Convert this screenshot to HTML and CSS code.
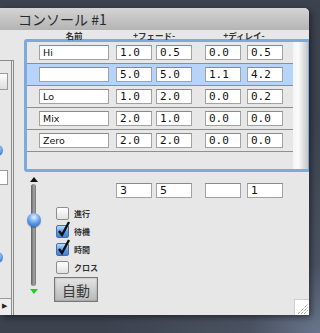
FILE: index.html
```html
<!DOCTYPE html>
<html>
<head>
    <meta charset="UTF-8">
    <title>コンソール #1</title>
    <link rel="stylesheet" href="styles.css">
</head>
<body>
    <div class="window">
        <div class="titlebar">コンソール #1</div>
        <div class="content">
            <div class="side">
                <div class="side-btn"></div>
                <div class="side-knob k1"></div>
                <div class="side-field"></div>
                <div class="side-knob k2"></div>
                <div class="side-scroll">&#9654;</div>
            </div>
            <div class="main">
                <div class="heads">
                    <span class="h-name">名前</span>
                    <span class="h-fade">+フェード-</span>
                    <span class="h-delay">+ディレイ-</span>
                </div>
                <div class="frame">
                    <div class="rows">
                        <div class="row">
                            <span class="field name">Hi</span>
                            <span class="field num c1">1.0</span>
                            <span class="field num c2">0.5</span>
                            <span class="field num c3">0.0</span>
                            <span class="field num c4">0.5</span>
                        </div>
                        <div class="row selected">
                            <span class="field name"></span>
                            <span class="field num c1">5.0</span>
                            <span class="field num c2">5.0</span>
                            <span class="field num c3">1.1</span>
                            <span class="field num c4">4.2</span>
                        </div>
                        <div class="row">
                            <span class="field name">Lo</span>
                            <span class="field num c1">1.0</span>
                            <span class="field num c2">2.0</span>
                            <span class="field num c3">0.0</span>
                            <span class="field num c4">0.2</span>
                        </div>
                        <div class="row">
                            <span class="field name">Mix</span>
                            <span class="field num c1">2.0</span>
                            <span class="field num c2">1.0</span>
                            <span class="field num c3">0.0</span>
                            <span class="field num c4">0.0</span>
                        </div>
                        <div class="row">
                            <span class="field name">Zero</span>
                            <span class="field num c1">2.0</span>
                            <span class="field num c2">2.0</span>
                            <span class="field num c3">0.0</span>
                            <span class="field num c4">0.0</span>
                        </div>
                    </div>
                    <div class="vscroll"></div>
                </div>
                <div class="lower">
                    <div class="slider">
                        <div class="arrow-up"></div>
                        <div class="track"></div>
                        <div class="arrow-down"></div>
                        <div class="knob"></div>
                    </div>
                    <div class="controls">
                        <div class="totals">
                            <span class="field total t1">3</span>
                            <span class="field total c2">5</span>
                            <span class="field total c3"></span>
                            <span class="field total c4">1</span>
                        </div>
                        <div class="checks">
                            <div class="check"><span class="box"></span><span class="label">進行</span></div>
                            <div class="check"><span class="box on"><svg width="15" height="17" viewBox="0 0 15 17"><path d="M3 10 L6 14 L13 1" fill="none" stroke="#111" stroke-width="2.4"/></svg></span><span class="label">待機</span></div>
                            <div class="check"><span class="box on"><svg width="15" height="17" viewBox="0 0 15 17"><path d="M3 10 L6 14 L13 1" fill="none" stroke="#111" stroke-width="2.4"/></svg></span><span class="label">時間</span></div>
                            <div class="check"><span class="box"></span><span class="label">クロス</span></div>
                        </div>
                        <button class="auto">自動</button>
                    </div>
                </div>
            </div>
        </div>
        <div class="grip">
            <svg width="14" height="15" viewBox="0 0 14 15">
                <path d="M3 14 L13 4 M6 14 L13 7 M9 14 L13 10" stroke="#777" stroke-width="1" stroke-dasharray="1 1"/>
            </svg>
        </div>
    </div>
</body>
</html>
```

FILE: styles.css
```css
body {
    margin: 0;
    width: 320px;
    height: 333px;
    overflow: hidden;
    background: radial-gradient(circle at 100% 100%, #68758c 0, #4a5261 70px, #3c424e 220px);
    font-family: "DejaVu Sans", sans-serif;
}
.window {
    position: relative;
    margin-top: 8px;
    width: 309px;
    height: 307px;
    background-color: #e7e7e7;
    border-radius: 0 5px 0 0;
    overflow: hidden;
    box-shadow: 2px 2px 6px rgba(0, 0, 0, 0.5);
}
.titlebar {
    height: 22px;
    line-height: 22px;
    padding-left: 18px;
    background: linear-gradient(#d4d4d4, #b4b4b4);
    color: #2a2a2a;
    font-family: "Noto Sans CJK JP", sans-serif;
    font-size: 14px;
}
.content {
    display: flex;
    height: 285px;
}
.side {
    box-sizing: border-box;
    width: 14px;
    margin-top: 30px;
    border-top: 1px solid #8c8c8c;
    border-right: 3px double #8c8c8c;
    display: flex;
    flex-direction: column;
}
.side-btn {
    width: 8px;
    height: 17px;
    margin-top: 12px;
    box-sizing: border-box;
    border: 1px solid #9a9a9a;
    border-left: none;
    background: linear-gradient(#fdfdfd, #dedede);
}
.side-knob {
    width: 11px;
    height: 11px;
    margin-left: -8px;
    border-radius: 50%;
    background: radial-gradient(circle at 50% 35%, #cfe6ff 0, #4b8fe3 60%, #1f5bb8 100%);
}
.k1 {
    margin-top: 55px;
}
.k2 {
    margin-top: 67px;
}
.side-field {
    width: 8px;
    height: 16px;
    margin-top: 14px;
    box-sizing: border-box;
    border: 1px solid #9a9a9a;
    border-left: none;
    background-color: white;
}
.side-scroll {
    margin-top: 35px;
    height: 16px;
    border-top: 1px solid #9a9a9a;
    font-size: 7px;
    line-height: 15px;
    padding-left: 2px;
    color: #222;
    background-color: #eeeeee;
}
.main {
    width: 295px;
    padding: 1px 0 0 10px;
    box-sizing: border-box;
}
.heads {
    display: flex;
    height: 8px;
    padding-left: 15px;
    font-family: "Noto Sans CJK JP", sans-serif;
    font-size: 8.5px;
    font-weight: bold;
    line-height: 8px;
    color: #333;
    text-align: center;
}
.h-name {
    width: 70px;
}
.h-fade {
    width: 76px;
    margin-left: 7px;
}
.h-delay {
    width: 78px;
    margin-left: 13px;
}
.frame {
    display: flex;
    width: 287px;
    height: 133px;
    box-sizing: border-box;
    border: 3px solid #7ea9de;
    border-radius: 3px;
}
.rows {
    flex: 1;
    background-color: #e7e7e7;
}
.vscroll {
    width: 15px;
    background: linear-gradient(to right, #f4f4f4, #fbfbfb 35%, #c6c6c6);
}
.row {
    display: flex;
    align-items: center;
    height: 22px;
    box-sizing: border-box;
    padding-left: 12px;
    border-bottom: 1px solid #8e8e8e;
}
.row.selected {
    background-color: #b6d4fa;
}
.field {
    display: block;
    box-sizing: border-box;
    height: 15px;
    padding-left: 3px;
    background-color: white;
    border: 1px solid #a2a2a2;
    border-top-color: #8a8a8a;
    line-height: 13px;
    color: #111;
}
.name {
    width: 70px;
    font-size: 9.5px;
}
.num {
    width: 36px;
    font-family: "DejaVu Sans Mono", monospace;
    font-size: 11px;
}
.c1 {
    margin-left: 7px;
}
.c2 {
    margin-left: 4px;
}
.c3 {
    margin-left: 13px;
}
.c4 {
    margin-left: 6px;
}
.lower {
    display: flex;
}
.slider {
    position: relative;
    width: 19px;
    display: flex;
    flex-direction: column;
    align-items: center;
    padding-top: 5px;
}
.arrow-up {
    width: 0;
    height: 0;
    border-left: 4px solid transparent;
    border-right: 4px solid transparent;
    border-bottom: 5px solid #111;
}
.track {
    width: 5px;
    height: 102px;
    margin-top: 2px;
    border-radius: 3px;
    background: linear-gradient(to right, #5e5e5e, #a4a4a4 60%, #777);
}
.arrow-down {
    width: 0;
    height: 0;
    margin-top: 3px;
    border-left: 4px solid transparent;
    border-right: 4px solid transparent;
    border-top: 5px solid #1ccf2c;
}
.knob {
    position: absolute;
    left: 3px;
    top: 41px;
    width: 14px;
    height: 14px;
    border-radius: 50%;
    background: radial-gradient(circle at 50% 30%, #e4f1ff 0, #6aa6ec 45%, #2a6cc8 85%, #1d55a8 100%);
    box-shadow: 0 1px 1px rgba(0, 0, 0, 0.3);
}
.controls {
    display: flex;
    flex-direction: column;
    align-items: flex-start;
}
.totals {
    display: flex;
    margin-top: 11px;
}
.total {
    width: 36px;
    font-size: 11px;
}
.t1 {
    margin-left: 73px;
}
.checks {
    margin-top: 9px;
    margin-left: 13px;
}
.check {
    display: flex;
    align-items: center;
    height: 18px;
}
.box {
    position: relative;
    width: 13px;
    height: 13px;
    box-sizing: border-box;
    margin-top: -5px;
    border: 1px solid #8e8e8e;
    border-radius: 2px;
    background: linear-gradient(#ffffff, #e2e2e2);
}
.box.on {
    border-color: #4a6fa5;
    background: linear-gradient(#bcd9fb, #5b9be6 55%, #3f82dc);
}
.box svg {
    position: absolute;
    left: -1px;
    top: -5px;
}
.label {
    margin-left: 5px;
    margin-top: -5px;
    font-family: "Noto Sans CJK JP", sans-serif;
    font-size: 8px;
    font-weight: bold;
    color: #333;
}
.auto {
    width: 44px;
    height: 25px;
    margin: -2px 0 0 11px;
    padding: 0;
    border: 1px solid #777;
    background: linear-gradient(#e4e4e4, #b9b9b9);
    box-shadow: inset 0 0 2px rgba(0, 0, 0, 0.3);
    font-family: "Noto Sans CJK JP", sans-serif;
    font-size: 14px;
    color: #3a3a3a;
}
.grip {
    position: absolute;
    right: 0;
    bottom: 0;
    width: 14px;
    height: 15px;
    background-color: white;
    border-top: 1px solid #cfcfcf;
    border-left: 1px solid #cfcfcf;
}
.grip svg {
    display: block;
}
```
